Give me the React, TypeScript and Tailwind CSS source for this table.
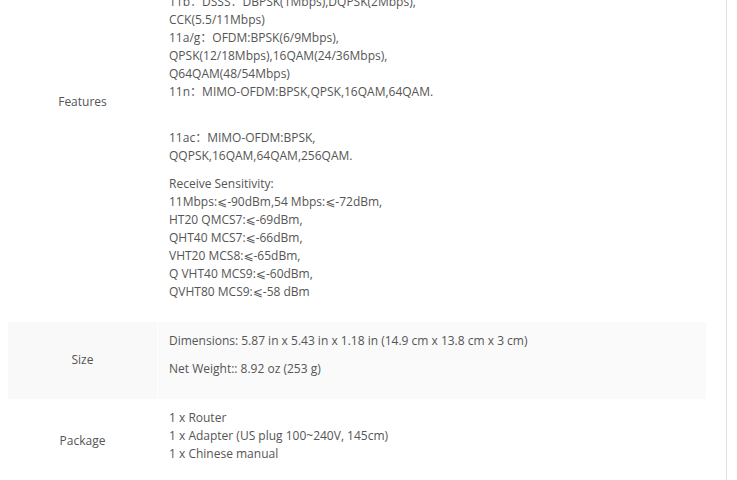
const FEATURE_LINES_TOP = [
  "Wireless Standard: IEEE 802.11ac/n/a 5 GHz,",
  "IEEE 802.11b/g/n 2.4 GHz",
  "Wireless Rate: 5 GHz: Up to 867 Mbps,",
  "2.4 GHz: Up to 300 Mbps",
  "Modulation Technology:",
];

const FEATURE_LINES = [
  "11b：DSSS：DBPSK(1Mbps),DQPSK(2Mbps),",
  "CCK(5.5/11Mbps)",
  "11a/g：OFDM:BPSK(6/9Mbps),",
  "QPSK(12/18Mbps),16QAM(24/36Mbps),",
  "Q64QAM(48/54Mbps)",
  "11n：MIMO-OFDM:BPSK,QPSK,16QAM,64QAM.",
];

const SENSITIVITY = [
  "Receive Sensitivity:",
  "11Mbps:⩽-90dBm,54 Mbps:⩽-72dBm,",
  "HT20 QMCS7:⩽-69dBm,",
  "QHT40 MCS7:⩽-66dBm,",
  "VHT20 MCS8:⩽-65dBm,",
  "Q VHT40 MCS9:⩽-60dBm,",
  "QVHT80 MCS9:⩽-58 dBm",
];

// the ⩽ sign comes out wider in the original, so give it its own font
function Sens({ text }: { text: string }) {
  const parts = text.split("⩽");
  return (
    <span className="block">
      {parts.map((p, i) => (
        <span key={i}>
          {i > 0 && <span className="font-['DejaVu_Sans',sans-serif]">⩽</span>}
          {p}
        </span>
      ))}
    </span>
  );
}

function Lines({ lines }: { lines: string[] }) {
  return (
    <>
      {lines.map((l, i) => (
        <Sens key={i} text={l} />
      ))}
    </>
  );
}

function Row({
  label,
  shaded,
  children,
}: {
  label: string;
  shaded?: boolean;
  children: React.ReactNode;
}) {
  return (
    <div className={`flex ${shaded ? "bg-[#fafafa]" : ""}`}>
      <div
        className={`flex w-[150px] shrink-0 items-center justify-center border-r border-white pb-[2px] ${
          shaded ? "bg-[#f9f9f9]" : ""
        }`}
      >
        {label}
      </div>
      <div className="flex-1 pl-[11px] pr-[10px] pt-[10px] pb-[11px]">{children}</div>
    </div>
  );
}

export default function App() {
  return (
    <div className="flex h-[480px] w-[737px] overflow-hidden bg-white font-['Open_Sans','Noto_Sans_CJK_SC',sans-serif] text-[12px] leading-[18px] text-[#555]">
      <div className="w-[727px] shrink-0 border-r border-[#e2e2e2] pl-2">
        <div className="-mt-[117px] w-[698px]">
          {/* Features */}
          <Row label="Features">
            <p className="mb-[10px]">
              <Lines lines={FEATURE_LINES_TOP} />
            </p>
            <p className="mb-[10px]">
              <Lines lines={FEATURE_LINES} />
              <br />
            </p>
            <p className="mb-[10px]">
              <Lines lines={["11ac：MIMO-OFDM:BPSK,", "QQPSK,16QAM,64QAM,256QAM."]} />
            </p>
            <p className="mb-[10px]">
              <Lines lines={SENSITIVITY} />
            </p>
          </Row>

          {/* Size */}
          <div className="[font-stretch:91%]">
            <Row label="Size" shaded>
              <p className="mb-[10px]">
                Dimensions: 5.87 in x 5.43 in x 1.18 in (14.9 cm x 13.8 cm x 3 cm)
              </p>
              <p className="mb-[10px]">Net Weight:: 8.92 oz (253 g)</p>
            </Row>

            {/* Package */}
            <Row label="Package">
              <p className="mb-[10px]">
                <Lines
                  lines={[
                    "1 x Router",
                    "1 x Adapter (US plug 100~240V, 145cm)",
                    "1 x Chinese manual",
                  ]}
                />
              </p>
            </Row>
          </div>
        </div>
      </div>
    </div>
  );
}
